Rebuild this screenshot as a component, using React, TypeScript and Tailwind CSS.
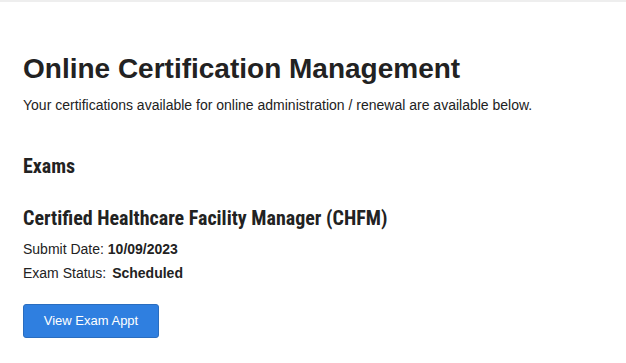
import React from 'react';

const condensed =
  "font-['Roboto_Condensed','Liberation_Sans_Narrow','Arial_Narrow',sans-serif] font-stretch-condensed";

export default function App() {
  return (
    <div className="min-h-screen bg-white font-['Liberation_Sans',Arial,sans-serif] text-[#222]">
      <div className="h-[2px] bg-[#eeeeee]" />
      <main className="px-[23px] pt-[49px]">
        {/* Page header */}
        <h1 className="text-[28px] font-bold leading-[36px] text-[#222]">Online Certification Management</h1>
        <p className="mt-[9px] text-[14px] leading-[18px]">
          Your certifications available for online administration / renewal are available below.
        </p>

        {/* Exams */}
        <h2 className={`${condensed} mt-[39px] text-[20px] font-bold leading-[26px]`}>Exams</h2>

        <div className="mt-[26px]">
          <h3 className={`${condensed} text-[20px] font-bold leading-[26px]`}>
            Certified Healthcare Facility Manager (CHFM)
          </h3>
          <p className="mt-[6px] text-[14px] leading-[24px]">
            Submit Date: <span className="font-bold">10/09/2023</span>
          </p>
          <p className="text-[14px] leading-[24px]">
            Exam Status: <span className="ml-[2px] font-bold">Scheduled</span>
          </p>
          <button className="mt-[19px] h-[34px] w-[136px] rounded-[3px] border border-[#2a6dbf] bg-[#2f7fe0] text-[13px] text-white">
            View Exam Appt
          </button>
        </div>
      </main>
    </div>
  );
}
